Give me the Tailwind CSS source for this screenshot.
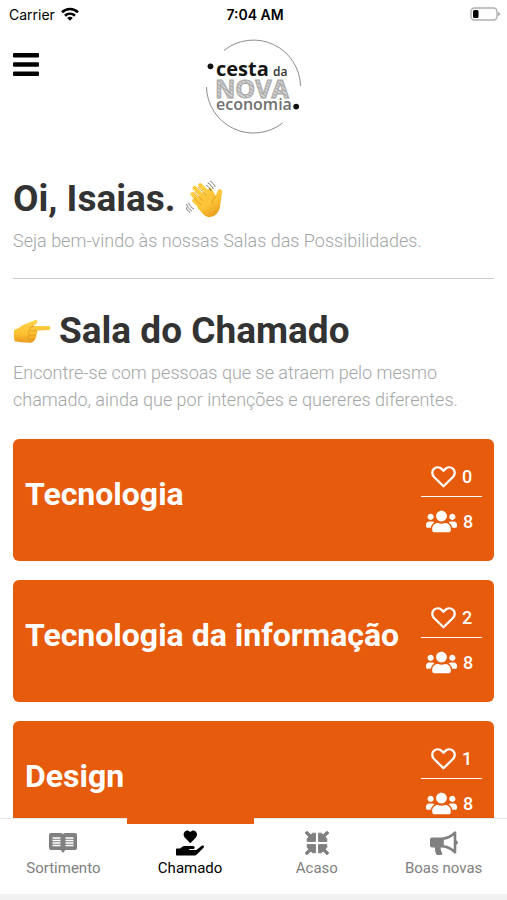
<!DOCTYPE html>
<html lang="pt-BR">
<head>
    <meta charset="UTF-8">
    <meta name="viewport" content="width=device-width, initial-scale=1.0">
    <title>Cesta da Nova Economia</title>
    <script src="https://cdn.jsdelivr.net/npm/@tailwindcss/browser@4"></script>
</head>
<body class="flex h-screen flex-col overflow-hidden bg-white font-['Roboto',sans-serif] text-[#333333]">

    <!-- Ícones reutilizados nos cards -->
    <svg class="hidden">
        <symbol id="heart" viewBox="0 0 25 22">
            <path d="M12.500 20.300 3.300 11.300C0.700 8.700 0.600 5 2.900 2.900 5.300 0.700 8.700 0.900 10.900 3.100L12.500 4.800 14.100 3.100C16.300 0.900 19.700 0.700 22.100 2.900 24.400 5 24.300 8.700 21.700 11.300Z" fill="none" stroke="currentColor" stroke-width="2.300" stroke-linejoin="round"/>
        </symbol>
        <symbol id="users" viewBox="0 0 640 512">
            <path fill="currentColor" d="M96 224c35.300 0 64-28.700 64-64s-28.700-64-64-64-64 28.700-64 64 28.700 64 64 64zm448 0c35.300 0 64-28.700 64-64s-28.700-64-64-64-64 28.700-64 64 28.700 64 64 64zm32 32h-64c-17.600 0-33.500 7.100-45.100 18.600 40.300 22.100 68.900 62 75.100 109.400h66c17.700 0 32-14.300 32-32v-32c0-35.300-28.700-64-64-64zm-256 0c61.900 0 112-50.100 112-112S381.900 32 320 32 208 82.100 208 144s50.100 112 112 112zm76.800 32h-8.300c-20.800 10-43.900 16-68.500 16s-47.600-6-68.500-16h-8.300C179.600 288 128 339.600 128 403.200V432c0 26.500 21.500 48 48 48h288c26.500 0 48-21.500 48-48v-28.800c0-63.600-51.600-115.200-115.200-115.200zm-223.700-13.400C161.500 263.100 145.600 256 128 256H64c-35.300 0-64 28.700-64 64v32c0 17.700 14.300 32 32 32h65.900c6.300-47.400 34.900-87.300 75.200-109.400z"/>
        </symbol>
    </svg>

    <!-- Barra de status -->
    <div class="grid h-7 shrink-0 grid-cols-3 items-center pl-[9px] pr-[6px] font-['Inter',sans-serif] text-[14px] text-black">
        <div class="flex items-center gap-[6px]">
            <span>Carrier</span>
            <svg class="h-[14px] w-[18px]" viewBox="0 0 18 14" fill="none" stroke="currentColor" stroke-width="2.600">
                <path d="M1 5.300C5.600 0.900 12.400 0.900 17 5.300"/>
                <path d="M4 8.700C6.900 6 11.100 6 14 8.700"/>
                <path d="M9 13.700 6.200 10.900C7.800 9.500 10.200 9.500 11.800 10.900Z" fill="currentColor" stroke="none"/>
            </svg>
        </div>
        <span class="text-center font-semibold">7:04 AM</span>
        <svg class="h-[14px] w-[31px] justify-self-end" viewBox="0 0 31 14">
            <rect x="1" y="1" width="26" height="12" rx="3.500" fill="none" stroke="#b0b0b0" stroke-width="1.400"/>
            <rect x="3" y="3" width="5.500" height="8" rx="1.500" fill="#000"/>
            <path d="M28 4.500 30.500 7 28 9.500Z" fill="#b0b0b0"/>
        </svg>
    </div>

    <!-- Cabeçalho -->
    <header class="grid shrink-0 grid-cols-3 items-start px-[13px] pt-[10px]">
        <button type="button" aria-label="Menu" class="mt-[15px] w-[26px]">
            <svg class="h-[23px] w-[26px]" viewBox="0 0 26 23" fill="#000">
                <rect width="26" height="4.600" rx="1"/>
                <rect y="9.200" width="26" height="4.600" rx="1"/>
                <rect y="18.400" width="26" height="4.600" rx="1"/>
            </svg>
        </button>
        <svg class="h-24 w-24 justify-self-center font-['Open_Sans',sans-serif]" viewBox="0 0 96 96">
            <defs>
                <pattern id="hatch" width="3" height="3" patternUnits="userSpaceOnUse" patternTransform="rotate(35)">
                    <rect width="3" height="3" fill="#d2d2d2"/>
                    <path d="M0 0H3" stroke="#8a8a8a" stroke-width="1.200"/>
                </pattern>
            </defs>
            <path d="M19 12.500A47 47 0 0 1 95.500 48M1.500 49A47 47 0 0 0 77.500 85" fill="none" stroke="#8c8c8c" stroke-width="1"/>
            <circle cx="5.500" cy="28.300" r="2.900" fill="#111"/>
            <circle cx="91.200" cy="68.600" r="2.900" fill="#111"/>
            <text x="11" y="38" class="text-[20px] font-bold" fill="#151515">cesta</text>
            <text x="68" y="38" class="text-[12px] font-semibold" fill="#333">da</text>
            <text x="10" y="60" class="text-[25px] font-bold" fill="url(#hatch)" stroke="#a6a6a6" stroke-width="1">NOVA</text>
            <text x="11" y="72" class="text-[16px] font-semibold" fill="#707070">economia</text>
        </svg>
    </header>

    <!-- Conteúdo -->
    <main class="min-h-0 flex-1 overflow-hidden px-[13px] pt-[43px]">
        <section class="border-b border-[#cccccc] pb-6">
            <h1 class="flex items-center gap-[10px] text-[37px] leading-[44px] font-bold">
                Oi, Isaias.
                <svg class="h-[37px] w-[37px]" viewBox="44 28 112 112" role="img" aria-label="Mão acenando">
                    <defs>
                        <linearGradient id="skin" x1="60" y1="40" x2="125" y2="140" gradientUnits="userSpaceOnUse">
                            <stop offset="0" stop-color="#ffcf45"/>
                            <stop offset="0.650" stop-color="#fcc337"/>
                            <stop offset="1" stop-color="#e99b1c"/>
                        </linearGradient>
                    </defs>
                    <path d="M84 73 119 47 134 73C138 67 137 58 143 54 150 51 155 57 153 64L148 98C146 126 127 140 108 136 98 133 89 121 78 108Z" fill="url(#skin)"/>
                    <g stroke="url(#skin)" stroke-width="13" stroke-linecap="round" fill="none">
                        <path d="M87 41 124 78"/>
                        <path d="M70 49 112 92"/>
                        <path d="M64 68 102 106"/>
                        <path d="M69 87 102 119"/>
                    </g>
                    <path d="M81 47 105 72M70 62 95 88M69 80 90 101M136 73C128 80 124 86 123 95" fill="none" stroke="#d98d1b" stroke-width="2.200" stroke-linecap="round"/>
                    <path d="M111 34C118 38 123 44 126 51M106 41C112 45 116 50 119 57M118 29C125 33 130 39 132 45M46 99C49 108 54 114 61 118M52 95C55 103 60 109 67 112M44 108C47 115 51 120 56 123" fill="none" stroke="#555" stroke-width="2.400" stroke-linecap="round"/>
                </svg>
            </h1>
            <p class="mt-[6px] text-[18px] leading-[27px] font-light text-[#a3a6a6]">Seja bem-vindo às nossas Salas das Possibilidades.</p>
        </section>

        <section class="pt-[30px]">
            <h2 class="flex items-center gap-2 text-[37px] leading-[44px] font-bold">
                <svg class="h-[24px] w-[38px]" viewBox="41 56 114 72" role="img" aria-label="Mão apontando">
                    <defs>
                        <linearGradient id="hand" x1="0" y1="60" x2="0" y2="128" gradientUnits="userSpaceOnUse">
                            <stop offset="0" stop-color="#ffd34e"/>
                            <stop offset="0.600" stop-color="#fcc02f"/>
                            <stop offset="1" stop-color="#e89a1e"/>
                        </linearGradient>
                    </defs>
                    <path d="M45 88C54 87 61 80 71 74 83 68 96 66 106 60 113 57 117 64 112 69L103 77H147C155 77 155 89 147 89L112 91C116 96 114 102 110 104 112 110 110 115 106 117 105 124 100 127 92 127L66 126C58 126 52 123 46 123 43 112 43 97 45 88Z" fill="url(#hand)"/>
                    <path d="M103 77 93 81C91 87 92 90 96 92L112 91M90 92C86 96 87 102 92 104L110 104M88 105C84 109 86 115 90 117L106 117" fill="none" stroke="#dc9220" stroke-width="2.400" stroke-linecap="round"/>
                </svg>
                Sala do Chamado
            </h2>
            <p class="mt-[6px] text-[18px] leading-[27px] font-light text-[#a3a6a6]">Encontre-se com pessoas que se atraem pelo mesmo chamado, ainda que por intenções e quereres diferentes.</p>

            <!-- Lista de salas -->
            <div class="mt-[26px] flex flex-col gap-[19px]">
                <a href="#" class="flex items-center justify-between rounded-[6px] bg-[#e75b0c] px-3 py-[22px] text-white">
                    <h3 class="pb-3 text-[32px] leading-[38px] font-bold">Tecnologia</h3>
                    <div class="w-[61px] text-[18px] font-medium">
                        <div class="border-b border-white pb-1">
                            <div class="flex h-[31px] items-center justify-center gap-[6px]">
                                <svg class="h-[22px] w-[25px]"><use href="#heart"/></svg>
                                <span>0</span>
                            </div>
                        </div>
                        <div class="mt-[9px] flex h-[31px] items-center justify-center gap-[6px] pr-1">
                            <svg class="h-[25px] w-[31px]"><use href="#users"/></svg>
                            <span>8</span>
                        </div>
                        <div class="h-[2px]"></div>
                    </div>
                </a>
                <a href="#" class="flex items-center justify-between rounded-[6px] bg-[#e75b0c] px-3 py-[22px] text-white">
                    <h3 class="pb-3 text-[32px] leading-[38px] font-bold">Tecnologia da informação</h3>
                    <div class="w-[61px] text-[18px] font-medium">
                        <div class="border-b border-white pb-1">
                            <div class="flex h-[31px] items-center justify-center gap-[6px]">
                                <svg class="h-[22px] w-[25px]"><use href="#heart"/></svg>
                                <span>2</span>
                            </div>
                        </div>
                        <div class="mt-[9px] flex h-[31px] items-center justify-center gap-[6px] pr-1">
                            <svg class="h-[25px] w-[31px]"><use href="#users"/></svg>
                            <span>8</span>
                        </div>
                        <div class="h-[2px]"></div>
                    </div>
                </a>
                <a href="#" class="flex items-center justify-between rounded-[6px] bg-[#e75b0c] px-3 py-[22px] text-white">
                    <h3 class="pb-3 text-[32px] leading-[38px] font-bold">Design</h3>
                    <div class="w-[61px] text-[18px] font-medium">
                        <div class="border-b border-white pb-1">
                            <div class="flex h-[31px] items-center justify-center gap-[6px]">
                                <svg class="h-[22px] w-[25px]"><use href="#heart"/></svg>
                                <span>1</span>
                            </div>
                        </div>
                        <div class="mt-[9px] flex h-[31px] items-center justify-center gap-[6px] pr-1">
                            <svg class="h-[25px] w-[31px]"><use href="#users"/></svg>
                            <span>8</span>
                        </div>
                        <div class="h-[2px]"></div>
                    </div>
                </a>
            </div>
        </section>
    </main>

    <!-- Navegação inferior -->
    <nav class="grid h-[82px] shrink-0 grid-cols-4 border-b-[6px] border-[#f1f1f1] bg-white text-[15px] leading-5 text-[#808080]">
        <a href="#" class="flex flex-col items-center gap-[2px] border-t border-[#e8e8e8] pt-[11px]">
            <svg class="h-[26px] w-[28px]" viewBox="0 0 28 26">
                <path d="M2 3H11.500Q13.200 3 14 4 14.800 3 16.500 3H26Q28 3 28 5V18Q28 20 26 20H17Q16 20 15.500 21L14 23 12.500 21Q12 20 11 20H2Q0 20 0 18V5Q0 3 2 3Z" fill="currentColor"/>
                <path d="M3.500 8H11.500M3.500 10.500H11.500M3.500 13H11.500M3.500 15.500H11.500M16.500 8H24.500M16.500 10.500H24.500M16.500 13H24.500M16.500 15.500H24.500" stroke="#fff" stroke-width="1.300"/>
            </svg>
            Sortimento
        </a>
        <a href="#" class="flex flex-col items-center gap-[2px] border-t-[6px] border-[#e75b0c] pt-[6px] text-black">
            <svg class="h-[26px] w-[28px]" viewBox="0 0 28 26" fill="currentColor">
                <path d="M14.300 13.200 8.700 7.500C7.200 5.900 7.300 3 8.900 1.500 10.600-0.100 12.900 0.200 14.300 2 15.700 0.200 18 -0.100 19.700 1.500 21.300 3 21.400 5.900 19.900 7.500Z"/>
                <path d="M0.700 18.500H4L6.300 16.700Q7.300 16 8.500 16H17Q18.700 16 18.700 17.500 18.700 19 17 19H13.300V20H19.500Q20.300 20 21 19.400L25.700 15.700C27.200 14.700 28.700 16.300 27.500 17.700L21 24.300Q20 25.500 18.500 25.500H0.700Q0 25.500 0 24.800V19.200Q0 18.500 0.700 18.500Z"/>
            </svg>
            Chamado
        </a>
        <a href="#" class="flex flex-col items-center gap-[2px] border-t border-[#e8e8e8] pt-[11px]">
            <svg class="h-[26px] w-[26px]" viewBox="0 0 26 26" fill="currentColor">
                <path id="arrow" d="M1.200 3 3 1.200 6.800 5 8.600 3.200H11.400V11.400H3.200V8.600L5 6.800Z" stroke="currentColor" stroke-width="1" stroke-linejoin="round"/>
                <use href="#arrow" transform="rotate(90 13 13)"/>
                <use href="#arrow" transform="rotate(180 13 13)"/>
                <use href="#arrow" transform="rotate(270 13 13)"/>
            </svg>
            Acaso
        </a>
        <a href="#" class="flex flex-col items-center gap-[2px] border-t border-[#e8e8e8] pt-[11px]">
            <svg class="h-[26px] w-[28px]" viewBox="0 0 28 26">
                <path d="M2 7.500H12.500V17.500H10.600C10.700 20 11.200 21.500 12.200 23 12.700 24 12.200 25 11 25H7.500Q6.500 25 6.100 24C5.200 22 4.900 20 5 17.500H2Q0 17.500 0 15.500V9.500Q0 7.500 2 7.500Z" fill="currentColor"/>
                <path d="M12.500 8.700C17.500 8.300 21.500 6 25 2.700V22.300C21.500 19 17.500 16.700 12.500 16.300Z" fill="none" stroke="currentColor" stroke-width="2.600" stroke-linejoin="round"/>
                <path d="M25.500 10Q28 10.500 28 12.500T25.500 15Z" fill="currentColor"/>
            </svg>
            Boas novas
        </a>
    </nav>

</body>
</html>
